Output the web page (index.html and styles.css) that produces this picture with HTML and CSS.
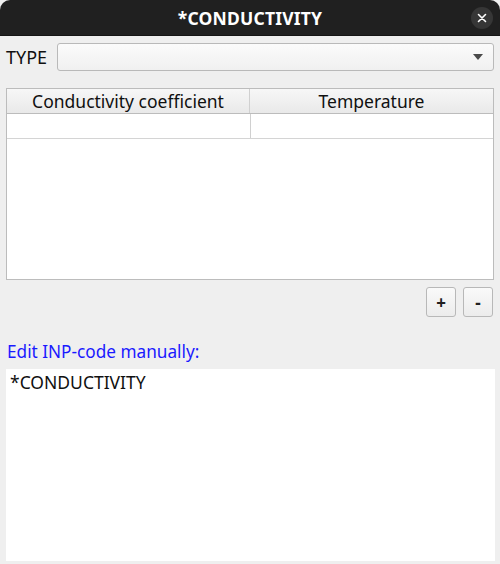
FILE: index.html
```html
<!DOCTYPE html>
<html>
<head>
<meta charset="utf-8">
<link rel="stylesheet" href="styles.css">
</head>
<body>
<div class="window">
  <div class="titlebar">
    <span class="title">*CONDUCTIVITY</span>
    <span class="close">
      <svg width="10" height="10" viewBox="0 0 10 10"><path d="M1.5 1.5 L8.5 8.5 M8.5 1.5 L1.5 8.5" stroke="#ffffff" stroke-width="1.6" stroke-linecap="round"/></svg>
    </span>
  </div>
  <div class="content">
    <div class="type-row">
      <span class="type-label">TYPE</span>
      <div class="combo">
        <svg class="arrow" width="10" height="6" viewBox="0 0 10 6"><path d="M0 0 L10 0 L5 6 Z" fill="#4a4a4a"/></svg>
      </div>
    </div>
    <div class="table">
      <div class="thead">
        <div class="th th-first">Conductivity coefficient</div>
        <div class="th">Temperature</div>
      </div>
      <div class="trow">
        <div class="td td-first"></div>
        <div class="td"></div>
      </div>
    </div>
    <div class="buttons">
      <button class="btn">+</button>
      <button class="btn">-</button>
    </div>
    <div class="edit-label">Edit INP-code manually:</div>
    <div class="editor">*CONDUCTIVITY</div>
  </div>
</div>
</body>
</html>
```
FILE: styles.css
```css
html, body {
  margin: 0;
  padding: 0;
  background: #ffffff;
}
body {
  width: 500px;
  height: 564px;
  overflow: hidden;
  font-family: "Noto Sans", "DejaVu Sans", sans-serif;
  font-size: 17px;
  color: #101010;
}
.window {
  width: 500px;
  height: 564px;
  background: #efefef;
  display: flex;
  flex-direction: column;
}
.titlebar {
  height: 36px;
  background: #202020;
  border-radius: 10px 10px 0 0;
  display: flex;
  align-items: center;
  justify-content: center;
  position: relative;
  box-shadow: inset 0 -1px 0 #151515;
}
.title {
  color: #ffffff;
  font-weight: bold;
  font-size: 17.5px;
  letter-spacing: 0.2px;
}
.close {
  position: absolute;
  right: 7px;
  top: 7px;
  width: 22px;
  height: 22px;
  border-radius: 50%;
  background: #363636;
  display: flex;
  align-items: center;
  justify-content: center;
}
.content {
  flex: 1;
  display: flex;
  flex-direction: column;
  padding: 7px 6px 3px 6px;
}
.type-row {
  display: flex;
  align-items: center;
  height: 28px;
}
.type-label {
  width: 51px;
  padding-left: 0;
  font-size: 18px;
}
.combo {
  flex: 1;
  height: 26px;
  border: 1px solid #b9b9b9;
  border-radius: 3px;
  background: linear-gradient(#fbfbfb, #f0f0f0);
  display: flex;
  align-items: center;
  justify-content: flex-end;
  padding-right: 10px;
}
.table {
  margin-top: 17px;
  height: 190px;
  border: 1px solid #bcbcbc;
  background: #ffffff;
}
.thead {
  display: flex;
  height: 24px;
  border-bottom: 1px solid #bcbcbc;
  background: linear-gradient(#f7f7f7, #e9e9e9);
}
.th {
  flex: 1;
  display: flex;
  align-items: center;
  justify-content: center;
  font-size: 17.5px;
}
.th-first, .td-first {
  flex: 0 0 242px;
  border-right: 1px solid #d0d0d0;
}
.trow {
  display: flex;
  height: 24px;
  border-bottom: 1px solid #d4d4d4;
}
.td {
  flex: 1;
}
.buttons {
  display: flex;
  justify-content: flex-end;
  gap: 7px;
  margin-top: 7px;
  padding-right: 1px;
}
.btn {
  width: 30px;
  height: 30px;
  border: 1px solid #b8b8b8;
  border-radius: 3px;
  background: linear-gradient(#fafafa, #ececec);
  font-family: "Noto Sans", "DejaVu Sans", sans-serif;
  font-size: 17px;
  font-weight: bold;
  color: #202020;
  padding: 0;
  display: flex;
  align-items: center;
  justify-content: center;
}
.edit-label {
  margin-top: 25px;
  color: #1a1aff;
  font-size: 17.2px;
  padding-left: 1px;
  line-height: 20px;
}
.editor {
  margin-top: 7px;
  flex: 1;
  background: #ffffff;
  padding: 1px 4px;
  font-size: 17.5px;
  line-height: 24px;
  margin-right: -1px;
}
```
